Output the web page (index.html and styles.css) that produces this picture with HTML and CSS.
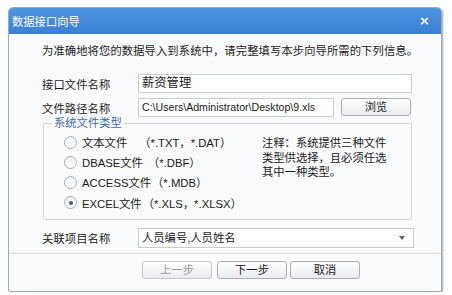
FILE: index.html
```html
<!DOCTYPE html>
<html lang="zh-CN">
<head>
    <meta charset="UTF-8">
    <title>数据接口向导</title>
    <link rel="stylesheet" href="styles.css">
</head>
<body>
    <div class="dialog">
        <div class="title-bar">
            <span class="title">数据接口向导</span>
            <span class="close">×</span>
        </div>

        <div class="content">
            <p class="intro">为准确地将您的数据导入到系统中，请完整填写本步向导所需的下列信息。</p>

            <div class="form-row">
                <label>接口文件名称</label>
                <div class="input wide">薪资管理</div>
            </div>

            <div class="form-row">
                <label>文件路径名称</label>
                <div class="input path">C:\Users\Administrator\Desktop\9.xls</div>
                <button class="btn browse">浏览</button>
            </div>

            <fieldset class="file-types">
                <legend>系统文件类型</legend>
                <div class="radios">
                    <div class="radio"><span class="dot"></span>文本文件<span class="ext wide-gap">（*.TXT，*.DAT）</span></div>
                    <div class="radio"><span class="dot"></span>DBASE文件<span class="ext">（*.DBF）</span></div>
                    <div class="radio"><span class="dot"></span>ACCESS文件<span class="ext tight">（*.MDB）</span></div>
                    <div class="radio checked"><span class="dot"></span>EXCEL文件<span class="ext tight">（*.XLS，*.XLSX）</span></div>
                </div>
                <p class="note">注释：系统提供三种文件类型供选择，且必须任选其中一种类型。</p>
            </fieldset>

            <div class="form-row">
                <label>关联项目名称</label>
                <div class="input select">人员编号,人员姓名<span class="arrow"></span></div>
            </div>
        </div>

        <div class="footer">
            <button class="btn" disabled>上一步</button>
            <button class="btn">下一步</button>
            <button class="btn">取消</button>
        </div>
    </div>
</body>
</html>
```

FILE: styles.css
```css
body {
    margin: 0;
    background-color: #ffffff;
    font-family: "Liberation Sans", "Noto Sans CJK SC", sans-serif;
    font-size: 11.3px;
    color: #1a1a1a;
}

.dialog {
    margin: 7px 0 0 8px;
    width: 432px;
    height: 283px;
    border: 1px solid #9aa9bd;
    border-radius: 5px 5px 2px 2px;
    background-color: #fafbfd;
    box-shadow: 1px 1px 2px rgba(0, 0, 0, 0.35);
    display: flex;
    flex-direction: column;
    overflow: hidden;
}

.title-bar {
    height: 26px;
    flex: none;
    display: flex;
    align-items: center;
    justify-content: space-between;
    padding: 0 11px 0 3px;
    background: linear-gradient(#4c95e2, #3b80d2);
    color: #ffffff;
}

.close {
    font-size: 13px;
    font-weight: bold;
    font-family: "DejaVu Sans", sans-serif;
    line-height: 14px;
    margin-top: -1px;
}

.content {
    padding: 10px 0 0 33px;
}

.intro {
    margin: 0 0 16px 0;
    line-height: 14px;
    letter-spacing: 0.1px;
}

.form-row {
    display: flex;
    align-items: center;
    height: 19px;
    margin-bottom: 5px;
}

.form-row label {
    width: 96px;
    flex: none;
    letter-spacing: 0.1px;
}

.input {
    height: 17px;
    border: 1px solid #c9cdd3;
    background-color: #ffffff;
    padding: 0 3px;
    line-height: 17px;
    box-sizing: content-box;
    white-space: nowrap;
    overflow: hidden;
}

.input.wide {
    width: 266px;
    font-size: 12.3px;
}

.input.path {
    width: 188px;
    font-size: 10.6px;
}

.btn {
    width: 70px;
    height: 18px;
    padding: 0;
    border: 1px solid #a9aeb5;
    border-radius: 3px;
    background: linear-gradient(#ffffff, #e9ebee);
    font-family: "Liberation Sans", "Noto Sans CJK SC", sans-serif;
    font-size: 11.3px;
    color: #1a1a1a;
    line-height: 16px;
}

.btn:disabled {
    color: #9a9a9a;
    border-color: #c4c8cd;
}

.browse {
    margin-left: 7px;
    margin-top: -2px;
}

.file-types {
    margin: -6px 0 8px 1px;
    width: 369px;
    box-sizing: border-box;
    height: 104px;
    border: 1px solid #d3d7dd;
    border-radius: 2px;
    padding: 0 0 0 20px;
    display: flex;
}

.file-types legend {
    color: #3a6db3;
    padding: 0 2px;
    margin-left: -12px;
    line-height: 14px;
}

.radios {
    width: 198px;
    padding-top: 2px;
}

.radio {
    height: 20px;
    display: flex;
    align-items: center;
    white-space: nowrap;
}

.radio:last-child {
    height: 21px;
}

.ext {
    margin-left: 5px;
}

.ext.wide-gap {
    margin-left: 12px;
    word-spacing: 3px;
}

.ext.tight {
    margin-left: 1px;
}

.dot {
    width: 11px;
    height: 11px;
    border: 1px solid #aab0b8;
    border-radius: 50%;
    background: linear-gradient(#f0f2f4, #ffffff);
    margin-right: 5px;
    display: flex;
    align-items: center;
    justify-content: center;
}

.radio.checked .dot::after {
    content: "";
    width: 4px;
    height: 4px;
    border-radius: 50%;
    background-color: #555a60;
}

.note {
    margin: 6px 0 0 0;
    width: 126px;
    line-height: 14.5px;
}

.input.select {
    width: 268px;
    height: 18px;
    line-height: 18px;
    display: flex;
    justify-content: space-between;
    align-items: center;
}

.arrow {
    width: 0;
    height: 0;
    border-left: 3px solid transparent;
    border-right: 3px solid transparent;
    border-top: 4px solid #5c6066;
    margin-right: 5px;
}

.footer {
    margin-top: 1px;
    border-top: 1px solid #d5d9de;
    display: flex;
    gap: 3px;
    padding: 7px 0 0 133px;
}

.footer .btn:first-child {
    margin-right: 2px;
}
```
